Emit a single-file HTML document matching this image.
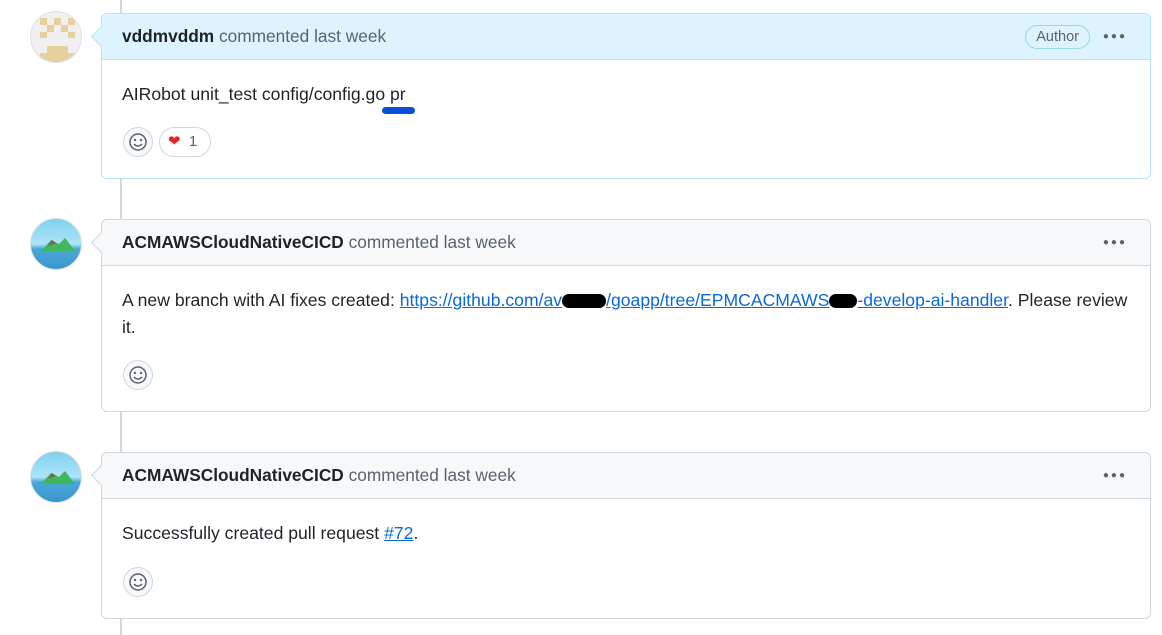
<!DOCTYPE html>
<html><head><meta charset="utf-8"><style>
body{margin:0;width:1162px;height:635px;background:#fff;font-family:"Liberation Sans",sans-serif;color:#1f2328;position:relative;overflow:hidden}
.line{position:absolute;left:120px;top:0;width:2px;height:635px;background:#d0d7de}
.box{position:absolute;left:101px;width:1048px;border:1px solid #d0d7de;border-radius:6px;background:#fff}
.box.me{border-color:#b6e3ff}
.hd{height:45px;border-bottom:1px solid #d0d7de;background:#f6f8fa;border-radius:6px 6px 0 0;font-size:17.3px;line-height:45px;padding-left:20px;color:#59636e;position:relative}
.me .hd{background:#ddf4ff;border-bottom-color:#b6e3ff}
.hd b{color:#1f2328}
.arrow{position:absolute;left:-8px;top:15px;width:14px;height:14px;background:inherit;border-left:1px solid #d0d7de;border-bottom:1px solid #d0d7de;transform:rotate(45deg)}
.me .arrow{border-color:#b6e3ff}
.dots{position:absolute;right:23px;top:0;font-size:10px;letter-spacing:2px;color:#59636e}
.author{position:absolute;right:60px;top:11px;height:22px;line-height:22px;border:1px solid #9ed3f5;border-radius:12px;padding:0 10px;font-size:14.5px;color:#59636e}
.bd{padding:0 8px 0 20px;font-size:17.6px;line-height:27px}
a{color:#0969da;text-decoration:underline}
.emo{position:absolute;width:30px;height:30px;border:1px solid #d0d7de;border-radius:50%;background:#f6f8fa;box-sizing:border-box}
.av{position:absolute;left:30px;width:52px;height:52px;border-radius:50%;overflow:hidden;box-sizing:border-box;border:1px solid #e0e0e0}
.blk{display:inline-block;background:#000;border-radius:8px;height:14px;vertical-align:middle}
</style></head><body>
<div class="line"></div>

<div class="av" style="top:11px;background:#f0f0f0">
<svg width="52" height="52" viewBox="0 0 52 52"><g fill="#e8cf9e"><rect x="9" y="6" width="7" height="7"/><rect x="23" y="6" width="7" height="7"/><rect x="37" y="6" width="7" height="7"/><rect x="16" y="13" width="7" height="7"/><rect x="30" y="13" width="7" height="7"/><rect x="9" y="20" width="7" height="6"/><rect x="37" y="20" width="7" height="6"/><rect x="16" y="34" width="21" height="7"/><rect x="9" y="41" width="35" height="10"/></g></svg></div>
<div class="box me" style="top:13px;height:164px">
 <div class="hd"><div class="arrow"></div><b>vddmvddm</b> commented last week<span class="author">Author</span><span class="dots">●●●</span></div>
 <div class="bd" style="padding-top:21px">AIRobot unit_test config/config.go pr</div>
 <div style="position:absolute;left:280px;top:93px;width:33px;height:7px;border-radius:4px;background:#0a4fd8"></div>
 <div class="emo" style="left:21px;top:113px"><svg width="28" height="28" viewBox="0 0 28 28"><circle cx="14" cy="14" r="8" fill="none" stroke="#59636e" stroke-width="1.5"/><circle cx="11" cy="12" r="1.2" fill="#59636e"/><circle cx="17" cy="12" r="1.2" fill="#59636e"/><path d="M10 16q4 4 8 0" fill="none" stroke="#59636e" stroke-width="1.5"/></svg></div>
 <div style="position:absolute;left:57px;top:113px;width:52px;height:30px;border:1px solid #d0d7de;border-radius:15px;box-sizing:border-box;font-size:15px;line-height:28px;color:#59636e"><span style="color:#e5252a;padding-left:8px;font-size:15px">❤</span>&nbsp;&nbsp;1</div>
</div>

<div class="av" style="top:218px;background:linear-gradient(#7fd0f0 0,#aee4f8 50%,#4aa8d8 60%,#3a96cc)">
<svg width="52" height="52" viewBox="0 0 52 52"><path d="M10 32l10-11 8 4 6-6 10 13z" fill="#3fb85a"/><path d="M17 27l4-6 4 3z" fill="#8a5a4a"/></svg></div>
<div class="box" style="top:219px;height:191px">
 <div class="hd"><div class="arrow"></div><b>ACMAWSCloudNativeCICD</b> commented last week<span class="dots">●●●</span></div>
 <div class="bd" style="padding-top:21px">A new branch with AI fixes created: <a>https://github.com/av<span class="blk" style="width:44px"></span>/goapp/tree/EPMCACMAWS<span class="blk" style="width:28px"></span>-develop-ai-handler</a>. Please review it.</div>
 <div class="emo" style="left:21px;top:140px"><svg width="28" height="28" viewBox="0 0 28 28"><circle cx="14" cy="14" r="8" fill="none" stroke="#59636e" stroke-width="1.5"/><circle cx="11" cy="12" r="1.2" fill="#59636e"/><circle cx="17" cy="12" r="1.2" fill="#59636e"/><path d="M10 16q4 4 8 0" fill="none" stroke="#59636e" stroke-width="1.5"/></svg></div>
</div>

<div class="av" style="top:451px;background:linear-gradient(#7fd0f0 0,#aee4f8 50%,#4aa8d8 60%,#3a96cc)">
<svg width="52" height="52" viewBox="0 0 52 52"><path d="M10 32l10-11 8 4 6-6 10 13z" fill="#3fb85a"/><path d="M17 27l4-6 4 3z" fill="#8a5a4a"/></svg></div>
<div class="box" style="top:452px;height:165px">
 <div class="hd"><div class="arrow"></div><b>ACMAWSCloudNativeCICD</b> commented last week<span class="dots">●●●</span></div>
 <div class="bd" style="padding-top:21px">Successfully created pull request <a>#72</a>.</div>
 <div class="emo" style="left:21px;top:114px"><svg width="28" height="28" viewBox="0 0 28 28"><circle cx="14" cy="14" r="8" fill="none" stroke="#59636e" stroke-width="1.5"/><circle cx="11" cy="12" r="1.2" fill="#59636e"/><circle cx="17" cy="12" r="1.2" fill="#59636e"/><path d="M10 16q4 4 8 0" fill="none" stroke="#59636e" stroke-width="1.5"/></svg></div>
</div>
</body></html>
